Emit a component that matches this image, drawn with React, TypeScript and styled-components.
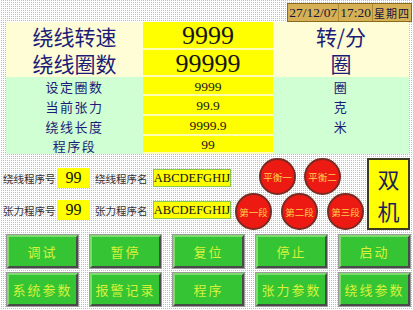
import React from "react";
import styled, { createGlobalStyle } from "styled-components";

// ==================== STYLES ====================
const GlobalStyle = createGlobalStyle`
  html, body {
    margin: 0;
    padding: 0;
  }
  body {
    font-family: "Noto Sans CJK SC", "Liberation Sans", sans-serif;
  }
`;

const Screen = styled.div`
  width: 413px;
  height: 310px;
  overflow: hidden;
  background-color: #fff;
  background-image: conic-gradient(#bdbdbd 0 25%, transparent 0);
  background-size: 2px 2px;
`;

const TopBar = styled.div`
  height: 22px;
  display: flex;
  justify-content: flex-end;
  align-items: flex-start;
  padding: 3px 1px 0 0;
  box-sizing: border-box;
`;

const Clock = styled.div`
  display: flex;
  height: 17px;
  background: #d6b055;
  border: 1px solid #8a6a1c;
  color: #14143c;
`;

const ClockPart = styled.span<{ $cjk?: boolean }>`
  display: flex;
  align-items: center;
  padding: 0 1px;
  font-family: ${({ $cjk }) =>
    $cjk
      ? `"Noto Sans CJK SC", sans-serif`
      : `"Liberation Serif", serif`};
  font-size: ${({ $cjk }) => ($cjk ? "11px" : "13.5px")};
  letter-spacing: ${({ $cjk }) => ($cjk ? "1px" : "0")};
  & + & {
    border-left: 1px solid #b08a30;
  }
`;

const Table = styled.div`
  margin-left: 6px;
  width: 403px;
  display: grid;
  grid-template-columns: 137px 130px 136px;
  grid-template-rows: 28px 27px 19px 20px 20px 18px;
`;

const Cell = styled.div<{ $tone: "cream" | "green" | "yellow"; $big?: boolean }>`
  display: flex;
  align-items: center;
  justify-content: center;
  background: ${({ $tone }) =>
    $tone === "cream" ? "#fffdd6" : $tone === "green" ? "#cfffd2" : "#ffff00"};
  ${({ $tone }) =>
    $tone === "yellow" ? "box-shadow: inset 0 -2px 0 #ffffb4;" : ""}
  color: #1c1c78;
  font-size: ${({ $big }) => ($big ? "21px" : "13px")};
  letter-spacing: ${({ $big }) => ($big ? "0" : "1.5px")};
  line-height: 1;
`;

const Num = styled.span<{ $big?: boolean }>`
  font-family: "Liberation Serif", serif;
  font-size: ${({ $big }) => ($big ? "26px" : "13.5px")};
  color: #151515;
  letter-spacing: 0;
`;

const Middle = styled.div`
  height: 79px;
  display: flex;
  padding-left: 3px;
  box-sizing: border-box;
`;

const ProgramBlock = styled.div`
  width: 232px;
  display: flex;
  flex-direction: column;
  padding-top: 14px;
  gap: 12px;
`;

const ProgramRow = styled.div`
  display: flex;
  align-items: center;
  height: 20px;
`;

const Label = styled.span<{ $w: number }>`
  width: ${({ $w }) => $w}px;
  text-align: right;
  font-size: 10.5px;
  color: #333;
  white-space: nowrap;
`;

const NumBox = styled.div`
  width: 33px;
  height: 20px;
  margin: 0 5px 0 2px;
  background: #ffff00;
  display: flex;
  align-items: center;
  justify-content: center;
  font-family: "Liberation Serif", serif;
  font-size: 16px;
  color: #111;
`;

const NameBox = styled.div`
  width: 76px;
  height: 16px;
  margin-left: 6px;
  background: #ffff00;
  border: 1px solid #8cc84a;
  display: flex;
  align-items: center;
  justify-content: center;
  font-family: "Liberation Serif", serif;
  font-size: 12.5px;
  color: #111;
`;

const Cluster = styled.div`
  width: 129px;
  padding-top: 4px;
  display: flex;
  flex-direction: column;
`;

const LampRow = styled.div<{ $indent: number; $gap: number }>`
  display: flex;
  gap: ${({ $gap }) => $gap}px;
  padding-left: ${({ $indent }) => $indent}px;
  & + & {
    margin-top: -2px;
  }
`;

const Lamp = styled.div`
  width: 37px;
  height: 37px;
  box-sizing: border-box;
  border-radius: 50%;
  background: #ec1a12;
  border: 2px solid #7a2a22;
  display: flex;
  align-items: center;
  justify-content: center;
  color: #ffcf4a;
  font-size: 9.5px;
  white-space: nowrap;
`;

const DualBox = styled.div`
  width: 43px;
  height: 72px;
  margin: 4px 0 0 3px;
  box-sizing: border-box;
  background: #ffff00;
  border: 2px solid #3a3a20;
  display: flex;
  flex-direction: column;
  align-items: center;
  justify-content: center;
  color: #1e1e5a;
  font-size: 22px;
`;

const DualChar = styled.span`
  display: block;
  height: 32px;
  line-height: 32px;
`;

const ButtonGrid = styled.div`
  margin: 2px 0 0 7px;
  display: grid;
  grid-template-columns: repeat(5, 71px);
  grid-auto-rows: 33px;
  column-gap: 12px;
  row-gap: 5px;
`;

const Button = styled.button`
  box-sizing: border-box;
  padding: 0;
  background: #35c534;
  border: 2px solid;
  border-color: #7edc6e #4a4a4a #4a4a4a #7edc6e;
  outline: 1px solid #9a9a9a;
  color: #d6f23c;
  font-family: "Noto Sans CJK SC", sans-serif;
  font-size: 13px;
  letter-spacing: 2px;
  cursor: pointer;
`;

// ==================== DATA ====================
const bigRows = [
  { label: "绕线转速", value: "9999", unit: "转/分" },
  { label: "绕线圈数", value: "99999", unit: "圈" },
];

const smallRows = [
  { label: "设定圈数", value: "9999", unit: "圈" },
  { label: "当前张力", value: "99.9", unit: "克" },
  { label: "绕线长度", value: "9999.9", unit: "米" },
  { label: "程序段", value: "99", unit: "" },
];

const programs = [
  { no: "绕线程序号", name: "绕线程序名" },
  { no: "张力程序号", name: "张力程序名" },
];

const buttons = [
  "调试", "暂停", "复位", "停止", "启动",
  "系统参数", "报警记录", "程序", "张力参数", "绕线参数",
];

// ==================== COMPOSANT ====================
const App: React.FC = () => {
  return (
    <>
      <GlobalStyle />
      <Screen>
        <TopBar>
          <Clock>
            <ClockPart>27/12/07</ClockPart>
            <ClockPart>17:20</ClockPart>
            <ClockPart $cjk>星期四</ClockPart>
          </Clock>
        </TopBar>

        <Table>
          {bigRows.map((r) => (
            <React.Fragment key={r.label}>
              <Cell $tone="cream" $big>{r.label}</Cell>
              <Cell $tone="yellow" $big>
                <Num $big>{r.value}</Num>
              </Cell>
              <Cell $tone="cream" $big>{r.unit}</Cell>
            </React.Fragment>
          ))}
          {smallRows.map((r) => (
            <React.Fragment key={r.label}>
              <Cell $tone="green">{r.label}</Cell>
              <Cell $tone="yellow">
                <Num>{r.value}</Num>
              </Cell>
              <Cell $tone="green">{r.unit}</Cell>
            </React.Fragment>
          ))}
        </Table>

        <Middle>
          <ProgramBlock>
            {programs.map((p) => (
              <ProgramRow key={p.no}>
                <Label $w={52}>{p.no}</Label>
                <NumBox>99</NumBox>
                <Label $w={52}>{p.name}</Label>
                <NameBox>ABCDEFGHIJ</NameBox>
              </ProgramRow>
            ))}
          </ProgramBlock>

          <Cluster>
            <LampRow $indent={24} $gap={8}>
              <Lamp>平衡一</Lamp>
              <Lamp>平衡二</Lamp>
            </LampRow>
            <LampRow $indent={0} $gap={9}>
              <Lamp>第一段</Lamp>
              <Lamp>第二段</Lamp>
              <Lamp>第三段</Lamp>
            </LampRow>
          </Cluster>

          <DualBox>
            <DualChar>双</DualChar>
            <DualChar>机</DualChar>
          </DualBox>
        </Middle>

        <ButtonGrid>
          {buttons.map((b) => (
            <Button key={b}>{b}</Button>
          ))}
        </ButtonGrid>
      </Screen>
    </>
  );
};

export default App;
